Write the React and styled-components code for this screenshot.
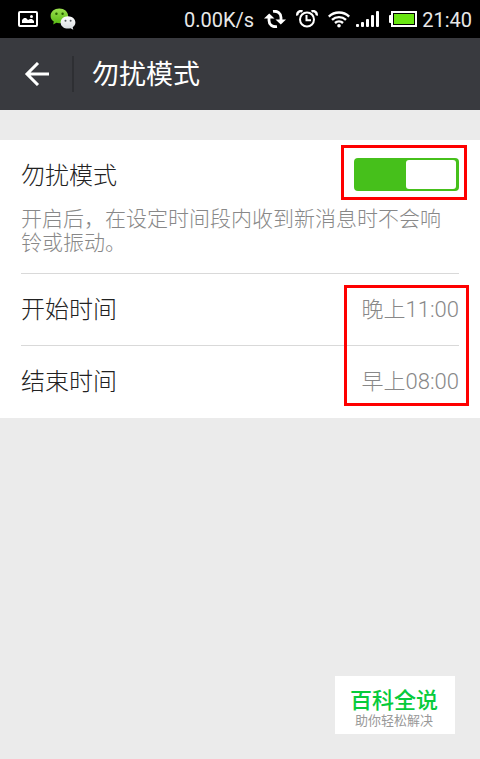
import React, { useState } from "react";
import styled, { createGlobalStyle } from "styled-components";

const GlobalStyle = createGlobalStyle`
  * { box-sizing: border-box; }
  body {
    margin: 0;
    background: #ebebeb;
    font-family: Roboto, "Noto Sans CJK SC", sans-serif;
    font-weight: 300;
  }
  button { font: inherit; border: 0; padding: 0; background: none; color: inherit; cursor: pointer; }
  h1, h2, p { margin: 0; font-weight: inherit; }
`;

const Screen = styled.div`
  display: flex;
  flex-direction: column;
  min-height: 100vh;
`;

const StatusBar = styled.div`
  display: flex;
  align-items: center;
  justify-content: space-between;
  height: 38px;
  padding: 0 8px 0 18px;
  background: #000;
  color: #fff;
`;

const StatusGroup = styled.div`
  display: flex;
  align-items: center;
  gap: ${({ $gap }) => $gap}px;
`;

const StatusText = styled.span`
  font-size: 20px;
  font-weight: 400;
  line-height: 24px;
  padding-top: 2px;
  color: #e8e8e8;
`;

const Icon = styled.svg`
  display: block;
  flex: none;
`;

const Header = styled.header`
  display: flex;
  align-items: center;
  height: 72px;
  background: #393a3f;
  color: #fff;
`;

const BackButton = styled.button`
  display: flex;
  align-items: center;
  justify-content: center;
  width: 72px;
  height: 72px;
`;

const Divider = styled.span`
  width: 2px;
  height: 36px;
  background: #2e2f33;
`;

const Title = styled.h1`
  padding: 2px 0 0 18px;
  font-size: 27px;
  font-weight: 400;
  line-height: 36px;
`;

const Panel = styled.main`
  margin-top: 30px;
  padding: 0 21px;
  background: #fff;
`;

const ModeSection = styled.section`
  padding: 18px 0;
  border-bottom: 1px solid #d9d9d9;
`;

const ModeHeading = styled.div`
  display: flex;
  align-items: flex-start;
  justify-content: space-between;
`;

const Label = styled.label`
  font-size: 24px;
  line-height: 36px;
  color: #222;
`;

const Description = styled.p`
  margin-top: 13px;
  font-size: 21px;
  line-height: 24px;
  color: #888;
`;

const SwitchWrap = styled.div`
  position: relative;
  display: flex;
`;

const Switch = styled.input`
  appearance: none;
  display: flex;
  justify-content: flex-end;
  width: 105px;
  height: 33px;
  margin: 0;
  padding: 2px 3px;
  border-radius: 4px;
  background: #46c01b;
  cursor: pointer;

  &::before {
    content: "";
    width: 50px;
    border-radius: 3px;
    background: #fff;
  }
  &:not(:checked) {
    justify-content: flex-start;
    background: #c8c8c8;
  }
`;

const Highlight = styled.span`
  position: absolute;
  border: 3px solid #fe0000;
  pointer-events: none;
`;

const SwitchHighlight = styled(Highlight)`
  inset: -13px -8px -9px -13px;
`;

const TimesHighlight = styled(Highlight)`
  inset: 11px -10px 12px auto;
  width: 125px;
`;

const Times = styled.section`
  position: relative;
`;

const TimeRow = styled.button`
  display: flex;
  align-items: center;
  justify-content: space-between;
  width: 100%;
  height: 72px;
  font-size: 24px;
  line-height: 36px;
  color: #222;

  &:first-child { border-bottom: 1px solid #d9d9d9; }
`;

const TimeValue = styled.span`
  font-size: 22px;
  color: #888;
`;

const Spacer = styled.div`
  flex: 1;
`;

const Badge = styled.aside`
  align-self: flex-end;
  display: flex;
  flex-direction: column;
  align-items: center;
  width: 120px;
  height: 58px;
  margin: 0 25px 25px 0;
  padding-top: 11px;
  background: #fff;
`;

const BadgeTitle = styled.span`
  font-size: 22px;
  font-weight: 500;
  line-height: 27px;
  padding-right: 2px;
  color: #07cb3b;
`;

const BadgeCaption = styled.span`
  font-size: 13px;
  font-weight: 400;
  line-height: 14px;
  padding-right: 2px;
  color: #999;
`;

const PictureIcon = () => (
  <Icon width="20" height="16" viewBox="0 0 20 16" aria-hidden="true">
    <rect x="1" y="1" width="18" height="14" rx="1" fill="none" stroke="#fff" strokeWidth="2" />
    <path d="M4 12V9l2-2h2l2 2 2-1 2 0 2 2v2z" fill="#fff" />
    <circle cx="13.5" cy="5.5" r="1.5" fill="#fff" />
  </Icon>
);

const ChatIcon = () => (
  <Icon width="26" height="22" viewBox="0 0 26 22" aria-hidden="true">
    <defs>
      <linearGradient id="chatGreen" x1="0" y1="0" x2="0" y2="1">
        <stop offset="0" stopColor="#9be04e" />
        <stop offset="1" stopColor="#56b812" />
      </linearGradient>
      <linearGradient id="chatWhite" x1="0" y1="0" x2="0" y2="1">
        <stop offset="0" stopColor="#fff" />
        <stop offset="1" stopColor="#d5dade" />
      </linearGradient>
    </defs>
    <path d="M9.3.5C4.400.5.600 3.700.600 7.900c0 2.300 1.200 4.400 3.200 5.700L3.200 16.500l3.200-1.700c.9.2 1.900.4 2.900.4 4.900 0 8.800-3.300 8.800-7.400S14.200.5 9.300.5z" fill="url(#chatGreen)" />
    <circle cx="6.400" cy="5.800" r="1.200" fill="#286100" />
    <circle cx="12.600" cy="5.800" r="1.200" fill="#286100" />
    <path d="M18 8.200c-4.200 0-7.400 2.800-7.400 6.200s3.200 6.200 7.400 6.200c.9 0 1.700-.1 2.500-.3l2.800 1.400-.6-2.500c1.600-1.100 2.700-2.800 2.700-4.800 0-3.400-3.300-6.200-7.400-6.200z" fill="url(#chatWhite)" />
    <circle cx="15.500" cy="12.800" r="1" fill="#535b60" />
    <circle cx="20.600" cy="12.800" r="1" fill="#535b60" />
  </Icon>
);

const SyncIcon = () => (
  <Icon width="22" height="18" viewBox="0 0 22 18" aria-hidden="true">
    <path d="M9 1.300C13.500.8 17 3.300 17 7.500V10" fill="none" stroke="#fff" strokeWidth="2.800" />
    <path d="M11.500 9.500H22L16.800 14.500z" fill="#fff" />
    <path d="M13 16.700C8.500 17.200 5 14.700 5 10.500V8" fill="none" stroke="#fff" strokeWidth="2.800" />
    <path d="M0 8.500h10.500L5.200 3.500z" fill="#fff" />
  </Icon>
);

const AlarmIcon = () => (
  <Icon width="22" height="18" viewBox="0 0 22 18" aria-hidden="true">
    <circle cx="11" cy="9.500" r="7" fill="none" stroke="#fff" strokeWidth="2" />
    <path d="M10.500 5v5.200H15" fill="none" stroke="#fff" strokeWidth="2" />
    <path d="M1.500 5.500C.5 3 3.500 0 6.500 1.500M20.500 5.500c1-2.500-2-5.500-5-4" fill="none" stroke="#fff" strokeWidth="2.400" />
  </Icon>
);

const WifiIcon = () => (
  <Icon width="22" height="17" viewBox="0 0 22 17" aria-hidden="true">
    <g fill="none" stroke="#fff" strokeWidth="2.400">
      <path d="M.8 5.600c5.800-5.400 14.600-5.400 20.400 0" />
      <path d="M4 8.900c4-3.700 10-3.700 14 0" />
      <path d="M7 12c2.300-2.100 5.700-2.100 8 0" />
    </g>
    <circle cx="11" cy="14.700" r="1.800" fill="#fff" />
  </Icon>
);

const SignalIcon = () => (
  <Icon width="23" height="16" viewBox="0 0 23 16" aria-hidden="true">
    <g fill="#fff">
      <rect x="0" y="13" width="3" height="3" rx="1" />
      <rect x="5" y="11" width="3" height="5" rx="1" />
      <rect x="10" y="8" width="3" height="8" rx="1" />
      <rect x="15" y="4" width="3" height="12" rx="1" />
      <rect x="20" y="0" width="3" height="16" rx="1" />
    </g>
  </Icon>
);

const BatteryIcon = () => (
  <Icon width="28" height="16" viewBox="0 0 28 16" aria-hidden="true">
    <rect x="0" y="4" width="3" height="8" rx="1" fill="#fff" />
    <rect x="3" y="1" width="24" height="14" fill="#000" stroke="#fff" strokeWidth="2" />
    <rect x="5" y="3" width="20" height="10" fill="#69e512" />
  </Icon>
);

const BackIcon = () => (
  <Icon width="26" height="24" viewBox="0 0 26 24" aria-hidden="true">
    <path d="M15 1L4 12l11 11M4 12h22" fill="none" stroke="#fff" strokeWidth="3" />
  </Icon>
);

const times = [
  { label: "开始时间", value: "晚上11:00" },
  { label: "结束时间", value: "早上08:00" },
];

export default function App() {
  const [enabled, setEnabled] = useState(true);
  return (
    <Screen lang="zh-CN">
      <GlobalStyle />
      <StatusBar>
        <StatusGroup $gap={12}>
          <PictureIcon />
          <ChatIcon />
        </StatusGroup>
        <StatusGroup $gap={10}>
          <StatusText>0.00K/s</StatusText>
          <SyncIcon />
          <AlarmIcon />
          <StatusGroup $gap={6}>
            <WifiIcon />
            <SignalIcon />
          </StatusGroup>
          <StatusGroup $gap={5}>
            <BatteryIcon />
            <StatusText>21:40</StatusText>
          </StatusGroup>
        </StatusGroup>
      </StatusBar>
      <Header>
        <BackButton type="button" aria-label="返回">
          <BackIcon />
        </BackButton>
        <Divider />
        <Title>勿扰模式</Title>
      </Header>
      <Panel>
        <ModeSection>
          <ModeHeading>
            <Label htmlFor="dnd">勿扰模式</Label>
            <SwitchWrap>
              <Switch
                id="dnd"
                type="checkbox"
                role="switch"
                checked={enabled}
                onChange={(e) => setEnabled(e.target.checked)}
              />
              <SwitchHighlight />
            </SwitchWrap>
          </ModeHeading>
          <Description>开启后，在设定时间段内收到新消息时不会响铃或振动。</Description>
        </ModeSection>
        <Times>
          {times.map((t) => (
            <TimeRow type="button" key={t.label}>
              <span>{t.label}</span>
              <TimeValue>{t.value}</TimeValue>
            </TimeRow>
          ))}
          <TimesHighlight />
        </Times>
      </Panel>
      <Spacer />
      <Badge>
        <BadgeTitle>百科全说</BadgeTitle>
        <BadgeCaption>助你轻松解决</BadgeCaption>
      </Badge>
    </Screen>
  );
}
